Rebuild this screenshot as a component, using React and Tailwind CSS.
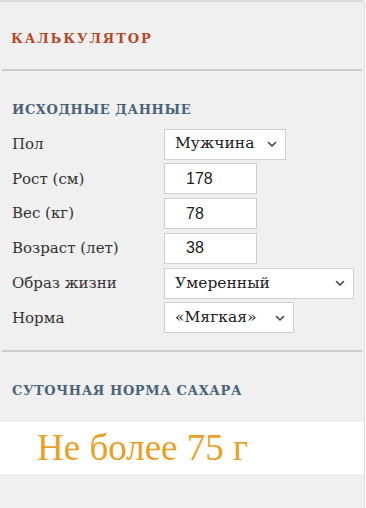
import React, { useState } from "react";

const serif = { fontFamily: '"DejaVu Serif", "Liberation Serif", serif' };

const Chevron = () => (
  <svg className="w-3 h-3 shrink-0" viewBox="0 0 12 12" fill="none" stroke="#444" strokeWidth={1.6}>
    <path d="M2.5 4.5 6 8l3.5-3.5" strokeLinecap="round" strokeLinejoin="round" />
  </svg>
);

const SelectBox = ({ value, width }) => (
  <div
    className={`h-[31px] ${width} bg-white border border-[#cfcfcf] flex items-center justify-between pl-[10px] pr-[7px] text-[15.5px] text-[#222]`}
  >
    <span>{value}</span>
    <Chevron />
  </div>
);

const NumberBox = ({ value }) => (
  <div
    className="h-[31px] w-[93px] bg-white border border-[#cfcfcf] flex items-center pl-[21px] text-[16px] text-[#222] font-['Liberation_Sans',sans-serif]"
  >
    {value}
  </div>
);

const Row = ({ label, children }) => (
  <div className="flex items-center h-[31px]">
    <div className="w-[152px] text-[15px] text-[#333]">{label}</div>
    {children}
  </div>
);

export default function App() {
  const [rows] = useState([
    ["Пол", <SelectBox value="Мужчина" width="w-[122px]" />],
    ["Рост (см)", <NumberBox value="178" />],
    ["Вес (кг)", <NumberBox value="78" />],
    ["Возраст (лет)", <NumberBox value="38" />],
    ["Образ жизни", <SelectBox value="Умеренный" width="w-[190px]" />],
    ["Норма", <SelectBox value="«Мягкая»" width="w-[130px]" />],
  ]);

  return (
    <div className="min-h-screen bg-white" style={serif}>
      <div className="w-[365px] min-h-[508px] bg-[#f0f0f0] border-t-2 border-r border-[#dcdcdc] rounded-tr-[4px]">
        {/* header */}
        <div className="h-[67px] flex items-center pl-[11px] pt-[7px]">
          <h2 className="text-[13px] font-bold tracking-[1.9px] text-[#b5472a]">КАЛЬКУЛЯТОР</h2>
        </div>
        <div className="mx-[2px] h-[2px] bg-[#cdcdcd]" />

        {/* input data */}
        <div className="pl-[12px] pt-[29px] pb-[17px]">
          <h3 className="text-[13px] font-bold tracking-[0.6px] text-[#4a6278] mb-[9px]">ИСХОДНЫЕ ДАННЫЕ</h3>
          <div className="flex flex-col gap-[3.8px]">
            {rows.map(([label, field]) => (
              <Row key={label} label={label}>
                {field}
              </Row>
            ))}
          </div>
        </div>
        <div className="mx-[2px] h-[2px] bg-[#cdcdcd]" />

        {/* result */}
        <div className="pl-[12px] pt-[29px] pb-[21px]">
          <h3 className="text-[13px] font-bold tracking-[0.6px] text-[#4a6278]">СУТОЧНАЯ НОРМА САХАРА</h3>
        </div>
        <div className="h-[52px] bg-white flex items-center pl-[37px]">
          <span className="text-[37px] leading-none text-[#e8a126] font-['Liberation_Serif',serif]">Не более 75 г</span>
        </div>
      </div>
    </div>
  );
}
